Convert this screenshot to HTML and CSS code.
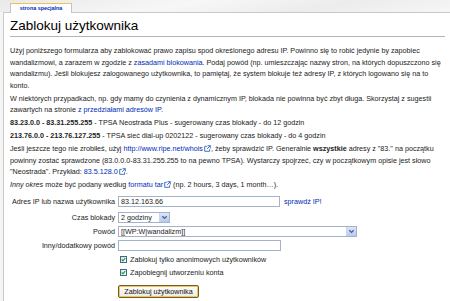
FILE: index.html
```html
<!DOCTYPE html>
<html lang="pl">
<head>
    <meta charset="UTF-8">
    <title>Zablokuj użytkownika</title>
    <link rel="stylesheet" href="styles.css">
</head>
<body>

<!-- Tabs -->
<div class="tabs">
    <span class="tab">strona specjalna</span>
</div>

<!-- Page content -->
<div class="content">
    <h1 class="title">Zablokuj użytkownika</h1>

    <p>Użyj poniższego formularza aby zablokować prawo zapisu spod określonego adresu IP. Powinno się to robić jedynie by zapobiec wandalizmowi, a zarazem w zgodzie z <a href="#">zasadami blokowania</a>. Podaj powód (np. umieszczając nazwy stron, na których dopuszczono się wandalizmu). Jeśli blokujesz zalogowanego użytkownika, to pamiętaj, że system blokuje też adresy IP, z których logowano się na to konto.</p>
    <p>W niektórych przypadkach, np. gdy mamy do czynienia z dynamicznym IP, blokada nie powinna być zbyt długa. Skorzystaj z sugestii zawartych na stronie <a href="#">z przedziałami adresów IP</a>.</p>
    <p><b>83.23.0.0 - 83.31.255.255</b> - TPSA Neostrada Plus - sugerowany czas blokady - do 12 godzin</p>
    <p><b>213.76.0.0 - 213.76.127.255</b> - TPSA sieć dial-up 0202122 - sugerowany czas blokady - do 4 godzin</p>
    <p>Jeśli jeszcze tego nie zrobiłeś, użyj <a href="#" class="external">http://www.ripe.net/whois<svg class="ext-icon" width="7" height="7" viewBox="0 0 10 10"><path d="M4 2H1v7h7V6" fill="none" stroke="#3366bb" stroke-width="1.3"/><path d="M5 1h4v4M9 1L4.5 5.5" fill="none" stroke="#3366bb" stroke-width="1.3"/></svg></a>, żeby sprawdzić IP. Generalnie <b>wszystkie</b> adresy z "83." na początku powinny zostać sprawdzone (83.0.0.0-83.31.255.255 to na pewno TPSA). Wystarczy spojrzeć, czy w początkowym opisie jest słowo "Neostrada". Przykład: <a href="#" class="external">83.5.128.0<svg class="ext-icon" width="7" height="7" viewBox="0 0 10 10"><path d="M4 2H1v7h7V6" fill="none" stroke="#3366bb" stroke-width="1.3"/><path d="M5 1h4v4M9 1L4.5 5.5" fill="none" stroke="#3366bb" stroke-width="1.3"/></svg></a>.</p>
    <p><i>Inny okres</i> może być podany według <a href="#" class="external">formatu tar<svg class="ext-icon" width="7" height="7" viewBox="0 0 10 10"><path d="M4 2H1v7h7V6" fill="none" stroke="#3366bb" stroke-width="1.3"/><path d="M5 1h4v4M9 1L4.5 5.5" fill="none" stroke="#3366bb" stroke-width="1.3"/></svg></a> (np. 2 hours, 3 days, 1 month…).</p>

    <!-- Block form -->
    <div class="block-form">
        <label class="form-label">Adres IP lub nazwa użytkownika</label>
        <div class="form-field">
            <span class="text-input ip-input">83.12.163.66</span>
            <a href="#" class="check-link">sprawdź IP!</a>
        </div>

        <label class="form-label">Czas blokady</label>
        <div class="form-field">
            <span class="select expiry-select">2 godziny<span class="select-arrow"><svg width="7" height="7" viewBox="0 0 8 8"><path d="M1.5 2.5L4 5l2.5-2.5" fill="none" stroke="#4d6185" stroke-width="1.5"/></svg></span></span>
        </div>

        <label class="form-label">Powód</label>
        <div class="form-field">
            <span class="select reason-select">[[WP:W|wandalizm]]<span class="select-arrow"><svg width="7" height="7" viewBox="0 0 8 8"><path d="M1.5 2.5L4 5l2.5-2.5" fill="none" stroke="#4d6185" stroke-width="1.5"/></svg></span></span>
        </div>

        <label class="form-label">Inny/dodatkowy powód</label>
        <div class="form-field">
            <span class="text-input other-input"></span>
        </div>

        <span></span>
        <div class="form-field check-row">
            <span class="checkbox"><svg width="5" height="5" viewBox="0 0 6 6"><path d="M0.8 3l1.6 1.6L5.2 1.2" fill="none" stroke="#21a121" stroke-width="1.4"/></svg></span>
            Zablokuj tylko anonimowych użytkowników
        </div>

        <span></span>
        <div class="form-field check-row">
            <span class="checkbox"><svg width="5" height="5" viewBox="0 0 6 6"><path d="M0.8 3l1.6 1.6L5.2 1.2" fill="none" stroke="#21a121" stroke-width="1.4"/></svg></span>
            Zapobiegnij utworzeniu konta
        </div>

        <span></span>
        <div class="form-field submit-row">
            <button class="submit-btn">Zablokuj użytkownika</button>
        </div>
    </div>
</div>

</body>
</html>
```

FILE: styles.css
```css
body {
    margin: 0;
    overflow: hidden;
    font-family: "Liberation Sans", Arial, sans-serif;
    font-size: 7.2px;
    color: #222;
    background: #f4f4f4;
}

a {
    color: #002bb8;
    text-decoration: none;
}

.tabs {
    height: 12px;
    padding-left: 10px;
    display: flex;
    align-items: flex-end;
    background: linear-gradient(170deg, #e9e9e9, #f7f7f7 40%, #ececec 70%, #f6f6f6);
}

.tab {
    position: relative;
    margin-bottom: -1px;
    width: 60px;
    height: 9px;
    line-height: 8px;
    text-align: center;
    font-size: 5.4px;
    font-weight: bold;
    color: #002bb8;
    background: #fff;
    border: 1px solid #c4c4c4;
    border-top-color: #f2c14e;
    border-bottom: none;
}

.content {
    margin-left: 3px;
    min-height: 300px;
    padding: 5px 5px 0 6px;
    background: #fff;
    border: 1px solid #c8c8c8;
    border-right: none;
}

.title {
    margin: 0;
    padding-bottom: 2px;
    font-size: 13.5px;
    line-height: 16px;
    font-weight: normal;
    color: #000;
    border-bottom: 1px solid #b4b4b4;
}

p {
    margin: 1.5px 0;
    line-height: 11.5px;
}

.title + p {
    margin-top: 8px;
}

.ext-icon {
    margin-left: 1px;
    vertical-align: -1px;
}

.block-form {
    display: grid;
    grid-template-columns: 105px 1fr;
    grid-template-rows: 16px 15px 13px 15px 14px 12px 26px;
    column-gap: 3px;
    margin-top: 3px;
}

.form-label {
    align-self: center;
    text-align: right;
}

.form-field {
    display: flex;
    align-items: center;
    gap: 4px;
}

.text-input,
.select {
    box-sizing: border-box;
    height: 11px;
    line-height: 9px;
    padding: 0 2px;
    background: #fff;
    border: 1px solid #a5b3c8;
}

.ip-input {
    width: 162px;
}

.other-input {
    width: 163px;
}

.select {
    display: flex;
    align-items: center;
    justify-content: space-between;
    padding-right: 0;
}

.expiry-select {
    width: 52px;
}

.reason-select {
    width: 239px;
}

.select-arrow {
    display: flex;
    align-items: center;
    justify-content: center;
    width: 9px;
    height: 9px;
    background: linear-gradient(#dce6fb, #b7c9f2);
    border-left: 1px solid #c9d5ee;
}

.check-row {
    gap: 3px;
    padding-left: 2px;
}

.checkbox {
    box-sizing: border-box;
    display: flex;
    align-items: center;
    justify-content: center;
    width: 7px;
    height: 7px;
    background: linear-gradient(135deg, #e0e0da, #fff);
    border: 1px solid #3a6a96;
}

.submit-row {
    align-items: flex-start;
    padding-top: 6px;
}

.submit-btn {
    height: 13px;
    width: 81px;
    padding: 0;
    font-family: inherit;
    font-size: 7.2px;
    color: #111;
    background: linear-gradient(#fdfdfb, #ecebe5);
    border: 1px solid #6f5d2c;
    border-radius: 2px;
    box-shadow: inset 0 0 0 1px #f3c45a;
}
```
